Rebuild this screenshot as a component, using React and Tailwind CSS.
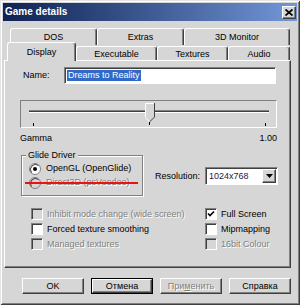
import React from "react";

const raised =
  "bg-[#d6d6d6] border border-t-white border-l-white border-b-[#404040] border-r-[#404040] shadow-[inset_-1px_-1px_0_#808080]";
const sunken =
  "border border-t-[#808080] border-l-[#808080] border-b-white border-r-white shadow-[inset_1px_1px_0_#404040]";
const disabledText = "text-[#808080] [text-shadow:1px_1px_0_#ffffff]";

function BackTab({ label, width }) {
  return (
    <div
      className={`${width} h-[17px] flex justify-center pt-[3px] rounded-t-[3px] bg-[#d6d6d6] border-t border-l border-t-white border-l-white border-r border-r-[#404040] shadow-[inset_-1px_0_0_#808080]`}
    >
      {label}
    </div>
  );
}

function FrontTab({ label, width }) {
  return (
    <div
      className={`${width} h-[15px] flex justify-center pt-[2px] rounded-t-[3px] bg-[#d6d6d6] border-t border-l border-t-white border-l-white border-r border-r-[#404040] shadow-[inset_-1px_0_0_#808080]`}
    >
      {label}
    </div>
  );
}

function Radio({ label, checked, disabled }) {
  return (
    <div className="flex items-center h-[11px]">
      <svg width="12" height="12" viewBox="0 0 12 12" className="shrink-0">
        <circle cx="6" cy="6" r="5.5" fill={disabled ? "#d6d6d6" : "#ffffff"} stroke="#808080" />
        <path d="M2.5 9.5 A5 5 0 0 1 9.5 2.5" fill="none" stroke="#404040" />
        {checked && <circle cx="6" cy="6" r="2" fill="#000000" />}
      </svg>
      <span className={`ml-[5px] whitespace-nowrap ${disabled ? disabledText : ""}`}>{label}</span>
    </div>
  );
}

function Check({ label, checked, disabled }) {
  return (
    <div className="flex items-center h-[12px]">
      <span
        className={`w-[12px] h-[12px] shrink-0 flex items-center justify-center ${sunken} ${
          disabled ? "bg-[#d6d6d6]" : "bg-white"
        }`}
      >
        {checked && (
          <svg width="8" height="8" viewBox="0 0 8 8">
            <path d="M1 3.5 L3 5.6 L7 1.5" fill="none" stroke="#000000" strokeWidth="1.6" />
          </svg>
        )}
      </span>
      <span className={`ml-[4px] whitespace-nowrap ${disabled ? disabledText : ""}`}>{label}</span>
    </div>
  );
}

function Slider() {
  return (
    <div className="ml-[15px] mt-[16px] w-[257px] h-[28px] border border-t-[#808080] border-l-[#808080] border-b-white border-r-white">
      <svg width="255" height="26" viewBox="0 0 255 26">
        <rect x="8" y="9" width="240" height="1" fill="#808080" />
        <rect x="8" y="10" width="240" height="1" fill="#404040" />
        <rect x="8" y="11" width="240" height="1" fill="#ffffff" />
        <polygon points="124,2 133,2 133,16 128.5,20.5 124,16" fill="#d6d6d6" />
        <polyline points="124.5,16 124.5,2.5 133,2.5" fill="none" stroke="#ffffff" />
        <polyline points="133.5,2 133.5,16 128.5,21" fill="none" stroke="#404040" />
        <line x1="128.5" y1="21" x2="124.5" y2="16.5" stroke="#ffffff" />
        <rect x="12" y="22" width="1" height="3" fill="#000000" />
        <rect x="128" y="21" width="1" height="3" fill="#000000" />
        <rect x="244" y="22" width="1" height="3" fill="#000000" />
      </svg>
    </div>
  );
}

function Button({ children, disabled, isDefault }) {
  const inner = (
    <div className={`w-full h-full flex items-center justify-center ${raised} ${disabled ? disabledText : ""}`}>
      {children}
    </div>
  );
  if (isDefault) {
    return <div className="w-[62px] h-[16px] border border-black">{inner}</div>;
  }
  return <div className="w-[62px] h-[16px]">{inner}</div>;
}

export default function App() {
  return (
    <div className="w-[300px] h-[305px] flex flex-col bg-[#d6d6d6] font-['Liberation_Sans',Arial,sans-serif] text-[9px] leading-[11px] text-black shadow-[inset_1px_1px_0_#e4e4e4,inset_-1px_-1px_0_#404040,inset_2px_2px_0_#ffffff,inset_-2px_-2px_0_#808080]">
      <div className="mx-[3px] mt-[3px] h-[18px] flex items-center pl-[2px] pr-[1px] bg-gradient-to-r from-[#0f2352] to-[#7397d8]">
        <span className="text-white font-bold text-[10px] leading-[12px]">Game details</span>
        <div className={`ml-auto w-[14px] h-[13px] flex items-center justify-center ${raised}`}>
          <svg width="8" height="7" viewBox="0 0 8 7">
            <path d="M0.5 0.5 L7.5 6.5 M7.5 0.5 L0.5 6.5" stroke="#000000" strokeWidth="1.7" />
          </svg>
        </div>
      </div>

      <div className="mt-[7px] ml-[10px] flex">
        <BackTab label="DOS" width="w-[87px]" />
        <BackTab label="Extras" width="w-[87px]" />
        <BackTab label="3D Monitor" width="w-[106px]" />
      </div>
      <div className="mt-[-3px] ml-[7px] h-[19px] flex items-end">
        <div className="relative z-10 w-[69px] h-[19px] flex justify-center pt-[4px] rounded-t-[3px] bg-[#d6d6d6] border-t border-l border-t-white border-l-white border-r border-r-[#404040] shadow-[inset_-1px_0_0_#808080]">
          Display
        </div>
        <FrontTab label="Executable" width="w-[81px]" />
        <FrontTab label="Textures" width="w-[71px]" />
        <FrontTab label="Audio" width="w-[62px]" />
      </div>

      <div className="mt-[-1px] ml-[4px] w-[287px] h-[208px] flex flex-col border border-t-white border-l-white border-b-[#404040] border-r-[#404040] shadow-[inset_-1px_-1px_0_#808080]">
        <div className="mt-[6px] ml-[18px] h-[17px] flex items-center">
          <span className="w-[41px]">Name:</span>
          <div className={`w-[212px] h-[17px] bg-white flex items-center pl-[2px] ${sunken}`}>
            <span className="bg-[#3169c6] text-white px-[1px]">Dreams to Reality</span>
          </div>
        </div>

        <Slider />

        <div className="mt-[5px] ml-[15px] w-[257px] flex justify-between">
          <span>Gamma</span>
          <span>1.00</span>
        </div>

        <div className="mt-[6px] flex h-[46px]">
          <div className="ml-[16px] mt-[5px] w-[122px] h-[41px] relative border border-[#808080] shadow-[1px_1px_0_#ffffff,inset_1px_1px_0_#ffffff] flex flex-col pl-[7px] pt-[7px] gap-[3px]">
            <span className="absolute top-[-6px] left-[4px] px-[2px] bg-[#d6d6d6]">Glide Driver</span>
            <Radio label="OpenGL (OpenGlide)" checked />
            <Radio label="Direct3D (psVoodoo)" disabled />
            <div className="absolute left-[3px] top-[26px] w-[113px] h-[2px] bg-[#ee1111]" />
          </div>
          <div className="ml-[12px] mt-[17px] h-[18px] flex items-center">
            <span className="w-[50px]">Resolution:</span>
            <div className={`w-[73px] h-[18px] bg-white flex items-center justify-between pr-[1px] ${sunken}`}>
              <span className="pl-[3px] text-[#2a1840]">1024x768</span>
              <div className={`w-[14px] h-[14px] flex items-center justify-center ${raised}`}>
                <svg width="7" height="4" viewBox="0 0 7 4">
                  <path d="M0 0 H7 L3.5 4 Z" fill="#000000" />
                </svg>
              </div>
            </div>
          </div>
        </div>

        <div className="mt-[12px] ml-[26px] grid grid-cols-[174px_1fr] gap-y-[3px]">
          <Check label="Inhibit mode change (wide screen)" disabled />
          <Check label="Full Screen" checked />
          <Check label="Forced texture smoothing" />
          <Check label="Mipmapping" />
          <Check label="Managed textures" disabled />
          <Check label="16bit Colour" disabled />
        </div>
      </div>

      <div className="mt-[10px] ml-[22px] flex gap-[7px]">
        <Button>OK</Button>
        <Button isDefault>Отмена</Button>
        <Button disabled>
          При<span className="underline">м</span>енить
        </Button>
        <Button>Справка</Button>
      </div>
    </div>
  );
}
